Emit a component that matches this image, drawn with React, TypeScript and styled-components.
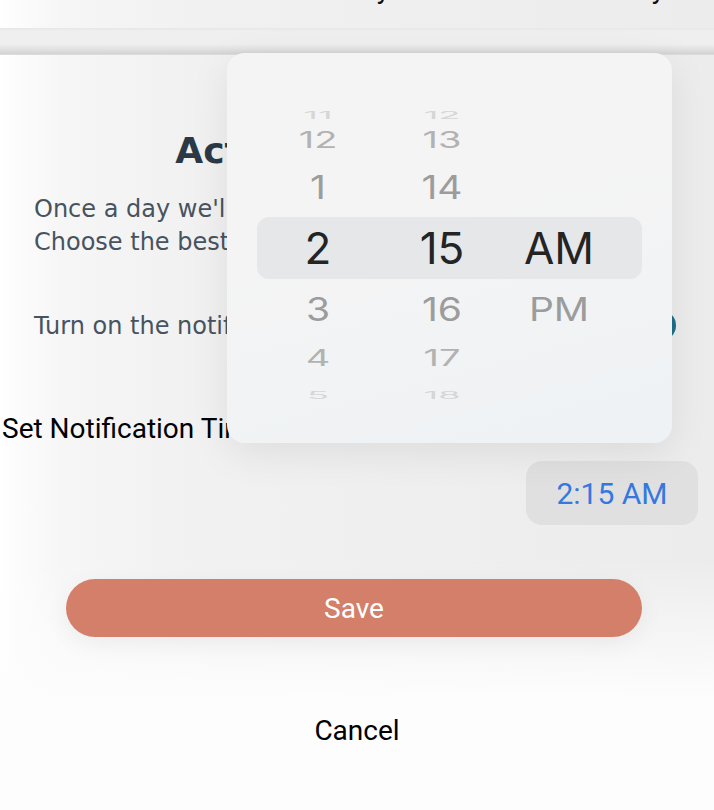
import styled, { createGlobalStyle } from "styled-components";

const GlobalStyle = createGlobalStyle`
    html, body {
        margin: 0;
        padding: 0;
    }

    body {
        width: 714px;
        height: 810px;
        overflow: hidden;
        font-family: Roboto, "Liberation Sans", sans-serif;
        background:
            linear-gradient(to bottom, rgba(255, 255, 255, 0) 0, rgba(255, 255, 255, 0) 560px, #fdfdfd 700px),
            linear-gradient(to right, #ffffff 0, #f6f6f6 60px, #f1f1f1 200px, #ececec 100%);
    }
`;

type WheelRow = {
    hour: string;
    minute: string;
    period?: string;
    depth: number;
    height: number;
};

const rows: WheelRow[] = [
    { hour: "11", minute: "12", depth: -3, height: 24 },
    { hour: "12", minute: "13", depth: -2, height: 36 },
    { hour: "1", minute: "14", depth: -1, height: 60 },
    { hour: "2", minute: "15", period: "AM", depth: 0, height: 62 },
    { hour: "3", minute: "16", period: "PM", depth: 1, height: 60 },
    { hour: "4", minute: "17", depth: 2, height: 38 },
    { hour: "5", minute: "18", depth: 3, height: 20 },
];

const looks = [
    { size: 44, scale: 1, color: "#242424" },
    { size: 39, scale: 0.82, color: "#9c9c9c" },
    { size: 38, scale: 0.6, color: "#b2b2b2" },
    { size: 36, scale: 0.28, color: "#d6d6d6" },
];

function App() {
    return (
        <Page>
            <GlobalStyle />
            <ClippedHeader>
                <span>Monday</span>
                <span>Sunday</span>
            </ClippedHeader>
            <HandleBar />

            <Content>
                <Title>Activity Reminder</Title>
                <Description>
                    Once a day we'll send you a reminder.
                    <br />
                    Choose the best time for you.
                </Description>
                <ToggleRow>
                    <span>Turn on the notifications</span>
                    <Toggle />
                </ToggleRow>
                <Label>Set Notification Time</Label>
                <TimeButton>2:15 AM</TimeButton>
                <SaveButton>Save</SaveButton>
                <CancelButton>Cancel</CancelButton>
            </Content>

            <Picker>
                {rows.map((row) => {
                    const look = looks[Math.abs(row.depth)];
                    return (
                        <PickerRow
                            key={row.hour}
                            $height={row.height}
                            $selected={row.depth === 0}
                        >
                            {[row.hour, row.minute, row.period ?? ""].map(
                                (value, i) => (
                                    <Cell key={i}>
                                        <WheelText
                                            $size={look.size}
                                            $scale={look.scale}
                                            $color={look.color}
                                        >
                                            {value}
                                        </WheelText>
                                    </Cell>
                                )
                            )}
                        </PickerRow>
                    );
                })}
            </Picker>
        </Page>
    );
}

export default App;

const Page = styled.div`
    position: relative;
    width: 714px;
    height: 810px;
    display: flex;
    flex-direction: column;
`;

const ClippedHeader = styled.div`
    height: 10px;
    overflow: hidden;
    display: flex;
    justify-content: space-between;
    padding: 0 49px 0 290px;
    font-size: 28px;
    line-height: 28px;
    color: #111;

    & span {
        margin-top: -25px;
    }
`;

const HandleBar = styled.div`
    margin-top: 18px;
    height: 27px;
    background: linear-gradient(
        to bottom,
        #e6e6e6 0,
        #efefef 3px,
        #efefef 16px,
        #e5e5e5 20px,
        #dcdcdc 23px,
        #d3d3d3 26px,
        #e4e4e4 27px
    );
`;

const Content = styled.div`
    display: flex;
    flex-direction: column;
`;

const Title = styled.h1`
    margin: 74px 0 0;
    text-align: center;
    font-family: "DejaVu Sans", "Liberation Sans", sans-serif;
    font-size: 36px;
    line-height: 44px;
    font-weight: 700;
    color: #2b3947;
`;

const Description = styled.p`
    margin: 20px 0 0;
    padding-left: 34px;
    font-family: "DejaVu Sans", "Liberation Sans", sans-serif;
    font-size: 24px;
    line-height: 33px;
    color: #47535f;
`;

const ToggleRow = styled.div`
    margin-top: 51px;
    display: flex;
    align-items: center;
    justify-content: space-between;
    padding: 0 38px 0 34px;
    font-family: "DejaVu Sans", "Liberation Sans", sans-serif;
    font-size: 24px;
    color: #47535f;
`;

const Toggle = styled.div`
    width: 51px;
    height: 31px;
    border-radius: 16px;
    background: #1f6e8a;
`;

const Label = styled.div`
    margin-top: 71px;
    padding-left: 2px;
    font-size: 28px;
    line-height: 34px;
    color: #000;
`;

const TimeButton = styled.button`
    align-self: flex-end;
    margin: 15px 16px 0 0;
    width: 172px;
    height: 64px;
    border: none;
    border-radius: 16px;
    background: #e0e0e0;
    font-family: Roboto, "Liberation Sans", sans-serif;
    font-size: 30px;
    color: #3478e0;
`;

const SaveButton = styled.button`
    margin: 54px 0 0 66px;
    width: 576px;
    height: 58px;
    border: none;
    border-radius: 29px;
    background: #d47f6a;
    box-shadow: 0 6px 24px rgba(0, 0, 0, 0.06);
    font-family: Roboto, "Liberation Sans", sans-serif;
    font-size: 28px;
    color: #ffffff;
`;

const CancelButton = styled.button`
    align-self: center;
    margin-top: 76px;
    border: none;
    background: none;
    font-family: Roboto, "Liberation Sans", sans-serif;
    font-size: 28px;
    line-height: 34px;
    color: #000;
`;

const Picker = styled.div`
    position: absolute;
    left: 227px;
    top: 53px;
    width: 445px;
    height: 390px;
    box-sizing: border-box;
    padding: 44px 30px 0;
    border-radius: 18px;
    background: linear-gradient(165deg, #f4f4f4 45%, #eef2f4 100%);
    box-shadow: 0 10px 40px rgba(0, 0, 0, 0.08);
    font-family: Inter, "Liberation Sans", sans-serif;
`;

const PickerRow = styled.div<{ $height: number; $selected: boolean }>`
    height: ${(p) => p.$height}px;
    display: grid;
    grid-template-columns: 122px 126px 108px 1fr;
    align-items: center;
    border-radius: 12px;
    background: ${(p) => (p.$selected ? "#e6e7e9" : "transparent")};
`;

const Cell = styled.div`
    display: flex;
    justify-content: center;
`;

const WheelText = styled.span<{ $size: number; $scale: number; $color: string }>`
    display: inline-block;
    font-size: ${(p) => p.$size}px;
    line-height: 1;
    color: ${(p) => p.$color};
    transform: scaleY(${(p) => p.$scale});
`;
